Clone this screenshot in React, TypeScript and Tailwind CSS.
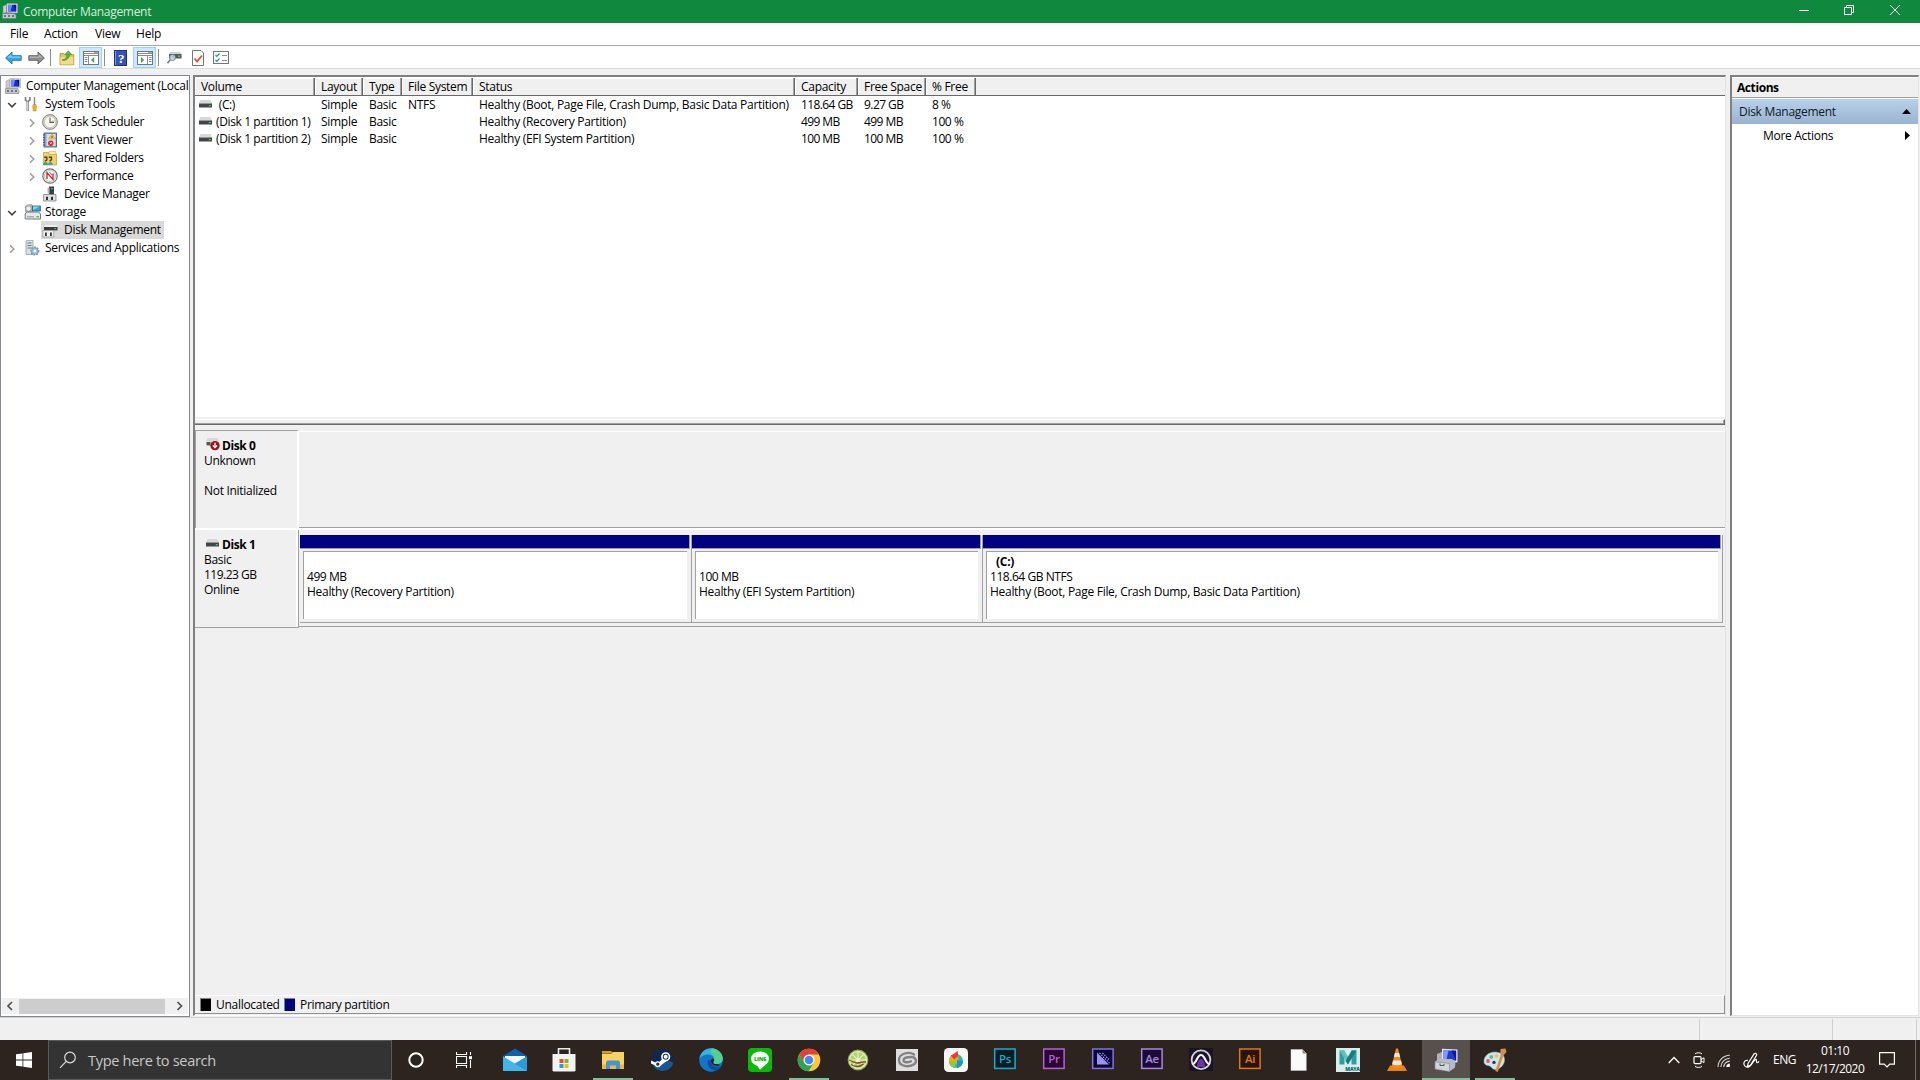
import React from 'react';

interface IconProps {
  className?: string;
}

const ComputerIcon: React.FC<IconProps> = ({ className = 'w-4 h-4' }) => (
  <svg viewBox="0 0 16 16" className={className}>
    <path d="M1 3.2l3.5-1.7v8l-3.5 0.8z" fill="#c9ccd2" stroke="#85888e" strokeWidth="0.5" />
    <path d="M5 0.5l10.5 0.2v9.3L5 9.5z" fill="#e3e5ea" stroke="#9a9da5" strokeWidth="0.5" />
    <path d="M6.2 1.7l8 0.2v6.9l-8-0.4z" fill="#1a2bd0" />
    <path d="M6.2 1.7l4 0.1-1.7 6.7-2.3-0.1z" fill="#6f8df2" />
    <path d="M11.5 1.8h2.7v7z" fill="#0a1690" />
    <path d="M0.5 10.5h12l1.5 2v3H0.5z" fill="#c3c6ca" stroke="#75787e" strokeWidth="0.6" />
    <path d="M2 12.3h2v1.5H2zM6 12.3h2v1.5H6zM10 12.3h2v1.5h-2z" fill="#55585c" />
  </svg>
);

const ToolsIcon = () => (
  <svg viewBox="0 0 16 16" className="w-4 h-4">
    <path d="M1.5 1v3.2l2.2 1.6 2.2-1.6V1" fill="none" stroke="#7d7d7d" strokeWidth="1.6" />
    <path d="M3.7 5v10" stroke="#7d7d7d" strokeWidth="2.4" />
    <path d="M3.7 5.5v9.2" stroke="#e8e8e8" strokeWidth="1" />
    <path d="M10.5 1v8" stroke="#888" strokeWidth="1.4" />
    <path d="M9.3 8.5h2.6l0.6 2-0.5 4.5H9.2l-0.5-4.5z" fill="#f0b323" stroke="#b87c0a" strokeWidth="0.5" />
  </svg>
);

const ClockIcon = () => (
  <svg viewBox="0 0 16 16" className="w-4 h-4">
    <circle cx="8" cy="8" r="7.4" fill="#d8d8d8" stroke="#777" strokeWidth="0.9" />
    <circle cx="8" cy="8" r="5.7" fill="#faf7e6" stroke="#999" strokeWidth="0.4" />
    <path d="M8 8h5v-3z" fill="#f4d99b" />
    <path d="M8 3.6V8.4h4" fill="none" stroke="#4a6078" strokeWidth="1.1" />
  </svg>
);

const EventIcon = () => (
  <svg viewBox="0 0 16 16" className="w-4 h-4">
    <rect x="2" y="1" width="12.5" height="14" fill="#8da7c9" stroke="#41516b" strokeWidth="0.8" />
    <rect x="4.5" y="2" width="9" height="12" fill="#d3def0" />
    <path d="M1 3h2M1 5.5h2M1 8h2M1 10.5h2M1 13h2" stroke="#41516b" strokeWidth="0.9" />
    <path d="M10 1.8l3.4 5H6.6z" fill="#ffd23c" stroke="#b98f12" strokeWidth="0.5" />
    <path d="M10 3.8v2.2" stroke="#333" strokeWidth="0.9" />
    <circle cx="8.8" cy="11.2" r="2.7" fill="#d5281f" />
    <path d="M7.8 10.2l2 2M9.8 10.2l-2 2" stroke="#fff" strokeWidth="0.8" />
  </svg>
);

const SharedIcon = () => (
  <svg viewBox="0 0 16 16" className="w-4 h-4">
    <path d="M1.5 2.5h5l1 1.5h7v11h-13z" fill="#f0cf68" stroke="#b58e2c" strokeWidth="0.6" />
    <path d="M7 1.5h7v3H7z" fill="#fbe9a8" stroke="#b58e2c" strokeWidth="0.4" />
    <path d="M2.2 7.3h2.6v2.6l-1.8 1.4M6.8 7.3h2.6v2.6l-1.8 1.4" fill="none" stroke="#4a4030" strokeWidth="1.4" />
    <path d="M1 15c0-2 1-3 2.6-3s2.4 1 2.4 3z" fill="#45a86a" />
    <path d="M6 15c0-2 1-3 2.3-3s2.4 1 2.4 3z" fill="#3d9cc0" />
  </svg>
);

const PerfIcon = () => (
  <svg viewBox="0 0 16 16" className="w-4 h-4">
    <circle cx="8" cy="8" r="7.2" fill="#f4f4f4" stroke="#747474" strokeWidth="1.2" />
    <circle cx="8" cy="8" r="5.4" fill="#fff" stroke="#a9a9a9" strokeWidth="0.7" />
    <path d="M5 11V4.8l6 6.6V5.5" fill="none" stroke="#c42324" strokeWidth="1.3" />
    <path d="M7.5 4.2l3 3" stroke="#c42324" strokeWidth="1" />
  </svg>
);

const DeviceIcon = () => (
  <svg viewBox="0 0 16 16" className="w-4 h-4">
    <path d="M7 0.5h5v8H7z" fill="#3b3f42" />
    <path d="M5.5 1.5h2v6h-2z" fill="#b4b8bb" />
    <rect x="9.3" y="2" width="1.4" height="1.4" fill="#3fe04c" />
    <path d="M1.5 8.5h12.5v6.5H1.5z" fill="#dcdee0" stroke="#777" strokeWidth="0.7" />
    <path d="M4 10.8h2V14H4zM9 10.8h2V14H9z" fill="#333" />
  </svg>
);

const StorageIcon = () => (
  <svg viewBox="0 0 17 16" className="w-[17px] h-4">
    <path d="M1.5 2.5L4 0.7h4v7H1.5z" fill="#c2c6ca" stroke="#7b7f84" strokeWidth="0.6" />
    <circle cx="4.5" cy="4.6" r="2.6" fill="#eef0f2" stroke="#888" strokeWidth="0.6" />
    <rect x="8.5" y="2" width="7.8" height="5" fill="#38a5d8" stroke="#2b5a75" strokeWidth="0.8" />
    <path d="M9 2.5h6.6L9 6z" fill="#8ed6f2" />
    <path d="M1.2 10l1.5-2h12l1.8 2v5H1.2z" fill="#e6e8ea" stroke="#66696d" strokeWidth="0.9" />
    <path d="M3 12.8h7" stroke="#999" strokeWidth="1.2" />
    <rect x="12.5" y="12" width="2.4" height="1.4" fill="#3fc04c" />
  </svg>
);

const DiskMgmtIcon = () => (
  <svg viewBox="0 0 16 16" className="w-4 h-4">
    <path d="M3 3.2h12.5l-1 2H1.8z" fill="#f0f1f2" />
    <path d="M2 5h13.5v3.4H2z" fill="#393c3e" />
    <rect x="12.3" y="6" width="1.6" height="1.1" fill="#3fe04c" />
    <path d="M0.8 8.5h11v6.5h-11z" fill="#eceeef" stroke="#888" strokeWidth="0.6" />
    <path d="M3 10.6h1.8V14H3zM8 10.6h1.8V14H8z" fill="#333" />
  </svg>
);

const ServicesIcon = () => (
  <svg viewBox="0 0 16 16" className="w-4 h-4">
    <path d="M2 1l1-0.7h6V14.5H2z" fill="#dbe0e5" stroke="#8b9299" strokeWidth="0.7" />
    <path d="M3.5 3h4M3.5 5.5h4M3.5 8h4" stroke="#5e6b78" strokeWidth="0.9" />
    <circle cx="10.8" cy="11" r="3.8" fill="#9fc4e2" stroke="#6a94b8" strokeWidth="1.6" strokeDasharray="1.6 1.2" />
    <circle cx="10.8" cy="11" r="3.1" fill="#a9cbe6" stroke="#6a94b8" strokeWidth="0.6" />
    <circle cx="10.8" cy="11" r="1.2" fill="#fff" />
  </svg>
);

const DriveIcon = () => (
  <svg viewBox="0 0 13 9" className="w-[13px] h-[9px] shrink-0">
    <path d="M1.5 0h10L13 3.5H0z" fill="#d6d8da" />
    <rect x="0" y="3.5" width="13" height="4" fill="#434648" />
    <rect x="9.8" y="5" width="1.8" height="1.2" fill="#42e04f" />
  </svg>
);

const Chevron: React.FC<{ open: boolean }> = ({ open }) => (
  <svg viewBox="0 0 10 10" className="w-[10px] h-[10px] mt-px">
    {open ? (
      <path d="M1.2 3L5 6.8 8.8 3" fill="none" stroke="#404040" strokeWidth="1.6" />
    ) : (
      <path d="M3 1.2L6.8 5 3 8.8" fill="none" stroke="#a0a0a0" strokeWidth="1.6" />
    )}
  </svg>
);

const tree = [
  { label: 'System Tools', level: 1, open: true, icon: <ToolsIcon /> },
  { label: 'Task Scheduler', level: 2, open: false, icon: <ClockIcon /> },
  { label: 'Event Viewer', level: 2, open: false, icon: <EventIcon /> },
  { label: 'Shared Folders', level: 2, open: false, icon: <SharedIcon /> },
  { label: 'Performance', level: 2, open: false, icon: <PerfIcon /> },
  { label: 'Device Manager', level: 2, open: null, icon: <DeviceIcon /> },
  { label: 'Storage', level: 1, open: true, icon: <StorageIcon /> },
  { label: 'Disk Management', level: 2, open: null, icon: <DiskMgmtIcon />, selected: true },
  { label: 'Services and Applications', level: 1, open: false, icon: <ServicesIcon /> },
];

const columns = [
  { label: 'Volume', width: 'w-[120px]', text: 'tracking-[-0.38px]' },
  { label: 'Layout', width: 'w-12', text: '' },
  { label: 'Type', width: 'w-[39px]', text: '' },
  { label: 'File System', width: 'w-[71px]', text: '' },
  { label: 'Status', width: 'w-[322px]', text: '' },
  { label: 'Capacity', width: 'w-[63px]', text: 'tracking-[-0.6px]' },
  { label: 'Free Space', width: 'w-[68px]', text: 'tracking-[-0.55px]' },
  { label: '% Free', width: 'w-[50px]', text: 'tracking-[-0.45px]' },
];

const volumes = [
  [' (C:)', 'Simple', 'Basic', 'NTFS', 'Healthy (Boot, Page File, Crash Dump, Basic Data Partition)', '118.64 GB', '9.27 GB', '8 %'],
  ['(Disk 1 partition 1)', 'Simple', 'Basic', '', 'Healthy (Recovery Partition)', '499 MB', '499 MB', '100 %'],
  ['(Disk 1 partition 2)', 'Simple', 'Basic', '', 'Healthy (EFI System Partition)', '100 MB', '100 MB', '100 %'],
];

const partitions = [
  { name: '', size: '499 MB', status: 'Healthy (Recovery Partition)', width: 'w-[392px]' },
  { name: '', size: '100 MB', status: 'Healthy (EFI System Partition)', width: 'w-[291px]' },
  {
    name: '(C:)',
    size: '118.64 GB NTFS',
    status: 'Healthy (Boot, Page File, Crash Dump, Basic Data Partition)',
    width: 'w-[740px]',
  },
];

const TitleBar = () => (
  <div className="h-[23px] bg-[#10893e] flex items-center text-white">
    <ComputerIcon className="w-4 h-4 ml-[2px] mb-px" />
    <span className="ml-[5px] text-[12px] tracking-[-0.3px] text-[#d9eedf]">Computer Management</span>
    <div className="ml-auto mr-[2px] flex h-full">
      <div className="w-[45px] flex justify-center pt-[5px] ml-px">
        <svg viewBox="0 0 10 10" className="w-[10px] h-[10px]"><path d="M0 5.5h10" stroke="#fff" /></svg>
      </div>
      <div className="w-[45px] flex justify-center pt-[5px]">
        <svg viewBox="0 0 10 10" className="w-[10px] h-[10px]">
          <path d="M0.5 2.5h7v7h-7zM2.5 2.5v-2h7v7h-2" fill="none" stroke="#fff" />
        </svg>
      </div>
      <div className="w-[47px] flex justify-center pt-[5px]">
        <svg viewBox="0 0 10 10" className="w-[10px] h-[10px]"><path d="M0 0l10 10M10 0L0 10" stroke="#fff" /></svg>
      </div>
    </div>
  </div>
);

const MenuBar = () => (
  <div className="h-[23px] bg-white border-b border-[#a9a9a9] flex items-center pl-[10px] text-[12px] tracking-[-0.2px]">
    <span className="w-[34px]">File</span>
    <span className="w-[51px]">Action</span>
    <span className="w-[41px]">View</span>
    <span>Help</span>
  </div>
);

const Separator: React.FC<IconProps> = ({ className = '' }) => (
  <div className={`w-px h-[17px] bg-[#8d8d8d] ${className}`} />
);

const PaneIcon: React.FC<{ flip?: boolean }> = ({ flip }) => (
  <svg viewBox="0 0 16 14" className="w-4 h-[14px]">
    <rect x="0.5" y="0.5" width="15" height="13" fill="#fff" stroke="#757575" />
    <path d="M1 2.5h14M1 4.5h14" stroke="#8c8c8c" />
    <path d="M11.5 1.5h1M13.5 1.5h1" stroke="#555" />
    {flip ? <path d="M10.5 5v8" stroke="#8c8c8c" /> : <path d="M5.5 5v8" stroke="#8c8c8c" />}
    {flip ? (
      <path d="M12 6.5h2.5M12 8.5h2.5M12 10.5h2.5" stroke="#6f8aa5" />
    ) : (
      <path d="M1.8 6.5h2.5M1.8 8.5h2.5M1.8 10.5h2.5" stroke="#6f8aa5" />
    )}
    {flip ? <path d="M4 6l3.2 3L4 12z" fill="#41a836" /> : <path d="M11.2 6L8 9l3.2 3z" fill="#41a836" />}
  </svg>
);

const ToolBar = () => (
  <div className="h-[23px] bg-white border-b border-[#dcdcdc] flex items-center">
    <svg viewBox="0 0 17 14" className="w-[17px] h-[14px] ml-[5px] mt-px">
      <path d="M0.6 7L7 1v3.7h9.2v4.6H7V13z" fill="#35a7e6" stroke="#1b6fa8" strokeWidth="0.9" />
      <path d="M2.5 6.6L6.3 3v2.6h9V7z" fill="#7fd0f6" />
    </svg>
    <svg viewBox="0 0 17 14" className="w-[17px] h-[14px] ml-[6px] mt-px">
      <path d="M16.4 7L10 1v3.7H0.8v4.6H10V13z" fill="#8f8f8f" stroke="#5c5c5c" strokeWidth="0.9" />
      <path d="M14.2 6.6L10.7 3.3v2.3h-9V7z" fill="#b3b3b3" />
    </svg>
    <Separator className="ml-[5px] mt-px" />
    <svg viewBox="0 0 16 16" className="w-4 h-4 ml-2 mt-px">
      <path d="M1 3.5h4l1 1.3h8.8v10H1z" fill="#e9c35d" stroke="#a88427" strokeWidth="0.7" />
      <path d="M1.5 7h12.8v7.4H1.5z" fill="#f5db88" />
      <path d="M3.5 9.5C6 9.5 8 7.5 8 4.5H5.8L9.4 0.8l3.4 3.7H10.5c0 4-3 6-7 6z" fill="#52bb3c" stroke="#2f8420" strokeWidth="0.5" />
    </svg>
    <div className="w-[23px] h-[21px] ml-1 mt-px bg-[#cce8ff] border border-[#99d1ff] flex items-center justify-center"><PaneIcon /></div>
    <Separator className="ml-[2px] mt-px" />
    <svg viewBox="0 0 13 16" className="w-[13px] h-4 ml-[9px] mt-px">
      <rect x="0.5" y="0.5" width="12" height="15" fill="#3355b5" stroke="#1f327a" />
      <path d="M1.5 1v14" stroke="#8398d8" />
      <text x="7" y="12.5" fontSize="13" fontWeight="bold" textAnchor="middle" fill="#fff" fontFamily="Liberation Serif">?</text>
    </svg>
    <div className="w-[23px] h-[21px] ml-[6px] mt-px bg-[#cce8ff] border border-[#99d1ff] flex items-center justify-center"><PaneIcon flip /></div>
    <Separator className="ml-[2px] mt-px" />
    <svg viewBox="0 0 16 14" className="w-4 h-[14px] ml-2 mt-[2px]">
      <path d="M3 1h10l1.5 2H2z" fill="#cdd0d2" />
      <path d="M2 3h12.5v4.5H2z" fill="#55595b" />
      <rect x="11" y="4.5" width="2" height="1.3" fill="#3fe04c" />
      <circle cx="5.5" cy="6.5" r="3" fill="#c9e2ee" fillOpacity="0.8" stroke="#6c7f8c" />
      <path d="M3.3 8.7L0.5 12.2" stroke="#6c7f8c" strokeWidth="1.6" />
    </svg>
    <svg viewBox="0 0 12 16" className="w-3 h-4 ml-[9px] mt-px">
      <path d="M0.5 0.5h8.5l2.5 2.5v12.5h-11z" fill="#fff" stroke="#777" />
      <path d="M2.5 8.5l2.5 3 5-6" fill="none" stroke="#e5532d" strokeWidth="1.8" />
    </svg>
    <svg viewBox="0 0 16 13" className="w-4 h-[13px] ml-[9px] mt-px">
      <rect x="0.5" y="0.5" width="15" height="12" fill="#fff" stroke="#757575" />
      <path d="M9 4.5h5M9 9.5h5" stroke="#8c8c8c" />
      <path d="M2.5 4l1.3 1.3L6.5 2.5M2.5 9l1.3 1.3L6.5 7.5" fill="none" stroke="#2b83cf" strokeWidth="1.2" />
    </svg>
  </div>
);

const TreePane = () => (
  <div className="w-[190px] shrink-0 h-[942px] bg-white border border-[#828790] flex flex-col overflow-hidden pt-px">
    <div className="h-[18px] flex items-center pl-1 whitespace-nowrap">
      <ComputerIcon className="w-4 h-4 shrink-0" />
      <span className="ml-[5px] tracking-[-0.27px]">Computer Management (Local</span>
    </div>
    {tree.map((node) => (
      <div key={node.label} className={`h-[18px] flex items-center whitespace-nowrap ${node.level === 2 ? 'pl-[26px]' : 'pl-[6px]'}`}>
        <div className="w-[10px] shrink-0">{node.open !== null && <Chevron open={node.open} />}</div>
        <div className={`h-[18px] flex items-center ml-1 pr-[3px] ${node.level === 2 ? 'pl-px' : 'pl-[3px]'} ${node.selected ? 'bg-[#d9d9d9]' : ''}`}>
          <div className="w-[17px]">{node.icon}</div>
          <span className={node.level === 2 ? 'ml-[5px]' : 'ml-1'}>{node.label}</span>
        </div>
      </div>
    ))}
    <div className="mt-auto mb-[2px] mx-px h-4 bg-[#f0f0f0] flex items-center">
      <svg viewBox="0 0 17 16" className="w-[17px] h-4"><path d="M10 4L6 8l4 4" fill="none" stroke="#505050" strokeWidth="1.7" /></svg>
      <div className="w-[146px] h-[15px] bg-[#cdcdcd]" />
      <svg viewBox="0 0 17 16" className="w-[17px] h-4 ml-auto"><path d="M6.5 4l4 4-4 4" fill="none" stroke="#505050" strokeWidth="1.7" /></svg>
    </div>
  </div>
);

const VolumeList = () => (
  <div className="h-[340px] bg-white">
    <div className="h-[19px] bg-[#f0f0f0] border-b border-[#696969] border-t border-t-white flex">
      {columns.map((col) => (
        <div key={col.label} className={`${col.width} h-[17px] pl-[6px] flex items-center border-r border-[#696969] shadow-[inset_-1px_0_0_#a0a0a0,inset_1px_1px_0_#fff] whitespace-nowrap`}>
          {col.label}
        </div>
      ))}
    </div>
    {volumes.map((row) => (
      <div key={row[0]} className="h-[17px] flex items-center whitespace-nowrap">
        {row.map((cell, i) => (
          <div key={i} className={`${columns[i].width} ${columns[i].text} flex items-center whitespace-pre shrink-0 ${i === 0 ? 'pl-1' : 'pl-[6px]'}`}>
            {i === 0 && <DriveIcon />}
            <span className={i === 0 ? 'ml-[4px]' : ''}>{cell}</span>
          </div>
        ))}
      </div>
    ))}
  </div>
);

const DiskMap = () => (
  <div className="bg-[#f0f0f0] flex flex-col grow">
    {/* splitter */}
    <div className="h-[8px] pt-[2px]">
      <div className="h-[6px] border-t border-t-white border-b border-b-[#696969] border-r border-r-[#696969] shadow-[inset_-1px_-1px_0_#a0a0a0]" />
    </div>
    <div className="h-[99px] mt-[5px] flex leading-[15px]">
      <div className="w-[104px] border-t border-l border-[#a0a0a0] border-r-2 border-r-white pl-[8px] pt-[7px]">
        <div className="flex items-center font-bold tracking-[-0.4px]">
          <svg viewBox="0 0 15 13" className="w-[15px] h-[13px] ml-[2px] mr-[1px] mb-[2px]">
            <path d="M1.5 0h10L13 3.5H0z" fill="#d6d8da" />
            <rect x="0.5" y="4" width="4" height="3.4" fill="#55585a" />
            <circle cx="9" cy="7.6" r="4.7" fill="#9c1220" />
            <path d="M9 4.8v4.6M6.9 7.5L9 9.6l2.1-2.1" fill="none" stroke="#fff" strokeWidth="1.3" />
          </svg>
          <span>Disk 0</span>
        </div>
        <div>Unknown</div>
        <div className="mt-[15px]">Not Initialized</div>
      </div>
      <div className="grow h-[97px] mt-px border-t border-t-white border-b border-b-[#a0a0a0]" />
    </div>
    <div className="h-[100px] flex border-t-2 border-t-white leading-[15px] -mt-[1px]">
      <div className="w-[104px] h-[98px] shrink-0 border-b border-[#a0a0a0] border-r border-r-[#a0a0a0] pl-[9px] pt-[7px] shadow-[inset_-2px_0_0_#fff]">
        <div className="flex items-center font-bold tracking-[-0.4px]">
          <div className="ml-[2px] mr-[3px] mb-[3px]"><DriveIcon /></div>
          <span>Disk 1</span>
        </div>
        <div>Basic</div>
        <div className="tracking-[-0.5px]">119.23 GB</div>
        <div>Online</div>
      </div>
      <div className="grow h-[97px] border-b border-[#a0a0a0] flex pt-[5px] pl-px">
        {partitions.map((p) => (
          <div key={p.size} className={`${p.width} h-[88px] shrink-0 border-b border-r border-[#a0a0a0]`}>
            <div className="h-[14px] bg-[#000080] border-b border-b-[#a0a0a0] border-r border-r-[#a0a0b0] mr-px" />
            <div className="mt-[2px] ml-[3px] mr-[4px] h-[68px] bg-white border-t border-l border-[#a0a0a0] pl-[3px] pt-[2px] whitespace-nowrap">
              <div className="h-[15px] font-bold pl-[6px]">{p.name}</div>
              <div className="tracking-[-0.45px]">{p.size}</div>
              <div>{p.status}</div>
            </div>
          </div>
        ))}
      </div>
    </div>
    <div className="mt-auto h-[19px] border-t border-t-white border-b border-b-[#8f8f8f] border-r border-r-[#8f8f8f] flex items-center pl-[5px]">
      <div className="w-[11px] h-[13px] bg-black border border-[#808080] border-b-0 border-r-0" />
      <span className="ml-[5px] w-[68px]">Unallocated</span>
      <div className="w-[11px] h-[13px] bg-[#000080] border border-[#808080] border-b-0 border-r-0" />
      <span className="ml-[5px] tracking-[-0.33px]">Primary partition</span>
    </div>
  </div>
);

const ActionsPane = () => (
  <div className="w-[189px] h-[941px] bg-white border-l-2 border-t-2 border-[#808080] border-r border-b border-r-[#e3e3e3] border-b-[#e3e3e3]">
    <div className="h-5 mt-px bg-[#f0f0f0] border-b border-[#a0a0a0] pl-[5px] flex items-center font-bold tracking-[-0.42px]">Actions</div>
    <div className="h-[25px] mt-px bg-gradient-to-b from-[#b9d1ea] to-[#99b4d1] flex items-center pl-[7px] pr-[7px] justify-between text-[#101828]">
      <span>Disk Management</span>
      <svg viewBox="0 0 9 5" className="w-[9px] h-[5px]"><path d="M0 5L4.5 0 9 5z" fill="#000" /></svg>
    </div>
    <div className="h-[23px] flex items-center pl-[31px] pr-2 justify-between">
      <span>More Actions</span>
      <svg viewBox="0 0 5 9" className="w-[5px] h-[9px]"><path d="M0 0l5 4.5L0 9z" fill="#000" /></svg>
    </div>
  </div>
);

interface AdobeProps {
  text?: string;
  fg: string;
  bg: string;
  children?: React.ReactNode;
}

const AdobeIcon: React.FC<AdobeProps> = ({ text, fg, bg, children }) => (
  <svg viewBox="0 0 24 24" className="w-6 h-6">
    <rect x="1.7" y="1" width="20.4" height="19.4" fill={bg} stroke={fg} strokeWidth="1.5" />
    <text x="12" y="15" fontSize="11.5" fontWeight="600" textAnchor="middle" fill={fg} fontFamily="Open Sans, sans-serif">{text}</text>
    {children}
  </svg>
);

const apps: { name: string; state?: string; icon: React.ReactNode }[] = [
  {
    name: 'mail',
    icon: (
      <svg viewBox="0 0 24 24" className="w-6 h-6">
        <path d="M0 8L12 0.5 24 8v4H0z" fill="#0d62ab" />
        <path d="M2 8h20v10H2z" fill="#f4f6f8" />
        <path d="M24 8.5L0 23h24z" fill="#1e8bd9" />
        <path d="M0 8.5l12 7L24 23H0z" fill="#42b6ec" />
        <path d="M12 15.5L24 8.5V23z" fill="#2a9ade" />
      </svg>
    ),
  },
  {
    name: 'store',
    icon: (
      <svg viewBox="0 0 24 24" className="w-6 h-6">
        <path d="M6.5 7V0.8h11V7" fill="none" stroke="#e8e8e8" strokeWidth="1.6" />
        <path d="M0.5 6h23v16.5l-1 1h-21l-1-1z" fill="#f2f2f2" />
        <path d="M7.5 11h4v4h-4z" fill="#e8502b" />
        <path d="M12.5 11h4v4h-4z" fill="#7ab929" />
        <path d="M7.5 16h4v4h-4z" fill="#2a9be0" />
        <path d="M12.5 16h4v4h-4z" fill="#f8b813" />
      </svg>
    ),
  },
  {
    name: 'explorer',
    state: 'open',
    icon: (
      <svg viewBox="0 0 24 24" className="w-6 h-6">
        <path d="M1 3h9l2 2H1z" fill="#d99a22" />
        <path d="M1 5.5h9.5L12 4h11v17H1z" fill="#fbd25d" />
        <path d="M1 16.5h22V21H1z" fill="#f0b63c" />
        <path d="M5 14l1.5-1.5h11L19 14v7h-4v-3.6H9V21H5z" fill="#4593d8" />
      </svg>
    ),
  },
  {
    name: 'steam',
    icon: (
      <svg viewBox="0 0 24 24" className="w-6 h-6">
        <circle cx="12.5" cy="12" r="11" fill="#12274f" />
        <path d="M3 17a11 11 0 0 0 20.4-2.5C18 12 9 13 3 17z" fill="#1a5790" />
        <path d="M1 12.5l7 3 5-5.5 4 2.8-6.6 5-2.8 1L1 15.5z" fill="#fff" />
        <circle cx="15.7" cy="8.8" r="3.8" fill="#12335f" stroke="#fff" strokeWidth="1.6" />
        <circle cx="15.7" cy="8.8" r="2" fill="#fff" />
        <circle cx="7.8" cy="16.2" r="2.3" fill="#12335f" stroke="#fff" strokeWidth="1.3" />
      </svg>
    ),
  },
  {
    name: 'edge',
    icon: (
      <svg viewBox="0 0 24 24" className="w-6 h-6">
        <circle cx="12" cy="12" r="11.8" fill="#1573c8" />
        <path d="M0.4 11C1.5 4 7 0.2 12 0.2 19 0.2 24 6 23.8 11c-0.2 3.5-3 5-6 5-2.6 0-4.2-1-3-2.6C16 11 14 6.5 9 6.5c-4 0-7.5 2.2-8.6 4.5z" fill="#35b4dc" />
        <path d="M13 0.3C20 1 24 6 23.8 11c-0.2 3.5-3 5-6 5-2.6 0-4.2-1-3-2.6C16 11 16 7 11 4z" fill="#5fd97a" fillOpacity="0.75" />
        <path d="M8.8 12.5C7.5 17 11 23 17.5 22.4c2-0.6 4.2-2.5 5-4.4-6 2.7-11.5-0.5-10.7-6.4z" fill="#0c4fa0" />
        <path d="M14.7 13.4c-1.2 1.6 0.4 2.6 3 2.6l4 1c-3 1.8-9.4 1-9.8-4 0-1.5 1-2.5 2-2.6 1.3 0 1.6 1.7 0.8 3z" fill="#2d241f" />
      </svg>
    ),
  },
  {
    name: 'line',
    icon: (
      <svg viewBox="0 0 24 24" className="w-6 h-6">
        <rect width="24" height="24" rx="4" fill="#0ab90a" />
        <ellipse cx="12" cy="10.8" rx="9" ry="7.4" fill="#fff" />
        <path d="M9 17.5l3 4.2 6-5.4z" fill="#fff" />
        <text x="12" y="13" fontSize="5.8" fontWeight="800" textAnchor="middle" fill="#0ab90a" fontFamily="Open Sans, sans-serif">LINE</text>
      </svg>
    ),
  },
  {
    name: 'chrome',
    state: 'open',
    icon: (
      <svg viewBox="0 0 24 24" className="w-6 h-6">
        <circle cx="12" cy="12" r="11.3" fill="#fbc934" />
        <path d="M2.2 6.4A11.3 11.3 0 0 1 21.8 6.5H12L7 14.5z" fill="#e04335" />
        <path d="M2.2 6.4A11.3 11.3 0 0 0 11.5 23.3L17 14.5 7.5 15z" fill="#2fa44f" />
        <circle cx="12" cy="12" r="5.5" fill="#fff" />
        <circle cx="12" cy="12" r="4.3" fill="#4587f3" />
      </svg>
    ),
  },
  {
    name: 'lime',
    icon: (
      <svg viewBox="0 0 24 24" className="w-6 h-6">
        <circle cx="12" cy="12" r="10.4" fill="#86a84a" />
        <circle cx="12" cy="12" r="9.3" fill="#dfeab4" />
        <circle cx="12" cy="12" r="7.8" fill="#b2cf6a" />
        <path d="M12 4v16M4 12h16M6.4 6.4l11.2 11.2M17.6 6.4L6.4 17.6" stroke="#eef5d2" strokeWidth="1.1" />
        <path d="M3 12c4 1.5 6 3 8.5 3s5-1.5 8.5-1" fill="none" stroke="#7a4a2c" strokeWidth="1.3" />
        <path d="M5 16.5c4 2.5 9 2.5 12.5-0.5" fill="none" stroke="#7a4a2c" strokeWidth="1.3" />
      </svg>
    ),
  },
  {
    name: 'clip',
    icon: (
      <svg viewBox="0 0 24 24" className="w-6 h-6">
        <rect x="1" y="1" width="22" height="22" fill="#dedede" />
        <path d="M19 6.5C14 3 4 5.5 4 12c0 6.5 10 8 15.5 4 3-2.5 1-7-3-7-4 0-8 0.5-8 3.2 0 2.5 4 2.6 7.5 1" fill="none" stroke="#828282" strokeWidth="2.3" strokeLinecap="round" />
      </svg>
    ),
  },
  {
    name: 'medibang',
    icon: (
      <svg viewBox="0 0 24 24" className="w-6 h-6">
        <rect width="24" height="24" rx="4.5" fill="#f7f7f7" />
        <circle cx="12" cy="13" r="7" fill="#28bda1" />
        <path d="M5 13a7 7 0 0 1 4-6.3L13.5 3l0.5 3.5 1 8L7 18z" fill="#f6a91c" />
        <path d="M6.5 7.5C9 6.5 11 5 13.5 3l0.7 5-4 3.5z" fill="#ea3d3f" />
        <path d="M5 13.5l7-1.5-1 8a7 7 0 0 1-6-6.5z" fill="#8fcb35" />
        <path d="M13 12l6 1a7 7 0 0 1-6 7z" fill="#1996cf" />
      </svg>
    ),
  },
  { name: 'ps', icon: <AdobeIcon text="Ps" fg="#22a9c9" bg="#041d26" /> },
  { name: 'pr', icon: <AdobeIcon text="Pr" fg="#b463cf" bg="#2a0634" /> },
  {
    name: 'me',
    icon: (
      <AdobeIcon fg="#7d74d6" bg="#0c0638">
        <path d="M6 4.5l12 12H6z" fill="#9c92f2" />
        <path d="M8.5 5l10 10M11.5 5l7 7" stroke="#9c92f2" strokeWidth="1.3" strokeDasharray="1.4 1.2" />
      </AdobeIcon>
    ),
  },
  { name: 'ae', icon: <AdobeIcon text="Ae" fg="#a98ad6" bg="#1c0a38" /> },
  {
    name: 'protools',
    icon: (
      <svg viewBox="0 0 24 24" className="w-6 h-6">
        <rect width="24" height="23" fill="#191423" />
        <circle cx="12" cy="11.8" r="9.4" fill="#1c1330" stroke="#d6d6d6" strokeWidth="1.8" />
        <path d="M7.5 19c1-4 2-8 4.5-8s3.5 4 4.5 8z" fill="#6a35a8" />
        <path d="M3.5 16c4 0 4.5-9 8.5-9s4.5 9 8.5 9" fill="none" stroke="#f2f2f2" strokeWidth="2.2" />
      </svg>
    ),
  },
  { name: 'ai', icon: <AdobeIcon text="Ai" fg="#d97a1c" bg="#2b1403" /> },
  {
    name: 'doc',
    icon: (
      <svg viewBox="0 0 24 24" className="w-6 h-6">
        <path d="M4 1.5h11.5l3.8 4v17H4z" fill="#fbfbfb" stroke="#ccc" strokeWidth="0.5" />
        <path d="M15.5 1.5v4h3.8z" fill="#8b8b8b" />
      </svg>
    ),
  },
  {
    name: 'maya',
    icon: (
      <svg viewBox="0 0 24 24" className="w-6 h-6">
        <rect width="24" height="24" fill="#d6efee" />
        <path d="M3.5 2.5h5v14h-5z" fill="#2f9f9c" />
        <path d="M15.5 2.5h5v14h-5z" fill="#2f9f9c" />
        <path d="M3.5 2.5h4.8L14 12l-2 4.5z" fill="#69bdb9" />
        <path d="M20.5 2.5h-4.8L9.5 13l2.5 3.5z" fill="#187b7d" />
        <text x="16.5" y="22.5" fontSize="5" fontWeight="800" textAnchor="middle" fill="#15696c" fontFamily="Open Sans, sans-serif">MAYA</text>
      </svg>
    ),
  },
  {
    name: 'vlc',
    icon: (
      <svg viewBox="0 0 24 24" className="w-6 h-6">
        <path d="M5 17.5h14l3 5.5H2z" fill="#ee8113" />
        <path d="M11 0.5h2L17.5 19c-3 1.6-8 1.6-11 0z" fill="#f58a1a" />
        <path d="M9.9 5h4.2l1 4H8.9z" fill="#e9e9e9" />
        <path d="M8 12.5h8l0.9 3.8c-3 1.3-6.8 1.3-9.8 0z" fill="#e9e9e9" />
      </svg>
    ),
  },
  {
    name: 'management',
    state: 'active',
    icon: (
      <svg viewBox="0 0 24 24" className="w-6 h-6">
        <path d="M3 6l5-2v10H3z" fill="#aeb2b8" />
        <path d="M8 0.8l15.5 0.7v13L8 12.5z" fill="#e3e6ec" />
        <path d="M9.5 2.2l12.6 0.6v10L9.5 11.3z" fill="#2039dc" />
        <path d="M9.5 2.2l5 0.2-2 9.3-3-0.4z" fill="#7e9bf8" />
        <path d="M17.5 2.6l4.6 0.2v10z" fill="#0b1795" />
        <path d="M1 13.5l4-2.5h13l3.5 3-0.5 5.5-5.5 4L1 21z" fill="#b4bcc2" />
        <path d="M1 13.8l14.5 1.7v8L1 21z" fill="#cfd5d9" stroke="#7c868d" strokeWidth="0.6" />
        <path d="M6 15.5v2h4V16" fill="none" stroke="#4c555b" strokeWidth="1" />
      </svg>
    ),
  },
  {
    name: 'paint',
    state: 'open',
    icon: (
      <svg viewBox="0 0 24 24" className="w-6 h-6">
        <path d="M1 14C0.5 8 6 4 12 4c6 0 10 3.5 9.5 8.5-0.5 5-5 9-9.5 9-3 0-3.5-3-5.5-3.5S1.3 17 1 14z" fill="#cfe4f3" stroke="#8fabc0" strokeWidth="0.6" />
        <circle cx="5" cy="13" r="1.9" fill="#e0605a" />
        <circle cx="8.3" cy="8.9" r="1.9" fill="#6cb85e" />
        <circle cx="13.5" cy="7.8" r="1.9" fill="#e9c24a" />
        <circle cx="11" cy="14.4" r="1.7" fill="#2d3a50" />
        <path d="M19.5 6L13.5 23.5" stroke="#dd8f34" strokeWidth="2.6" />
        <path d="M17.5 1l5-0.5 1 3.5-3.5 4-2.6-1.5z" fill="#c9935b" />
      </svg>
    ),
  },
];

const TaskBar = () => (
  <div className="h-10 bg-[#2d241f] flex text-white overflow-hidden">
    <div className="w-12 flex items-center justify-center">
      <svg viewBox="0 0 16 16" className="w-4 h-4">
        <path d="M0 2.3l6.5-0.9v6.2H0zM7.3 1.3L16 0v7.6H7.3zM0 8.4h6.5v6.2L0 13.7zM7.3 8.4H16V16l-8.7-1.2z" fill="#fff" />
      </svg>
    </div>
    <div className="w-[344px] bg-[#333333] border border-[#5a5a5a] flex items-center">
      <svg viewBox="0 0 18 18" className="w-[18px] h-[18px] ml-[10px]">
        <circle cx="11" cy="6.5" r="5.3" fill="none" stroke="#dcdcdc" strokeWidth="1.2" />
        <path d="M7.2 10.4L1 16.8" stroke="#dcdcdc" strokeWidth="1.2" />
      </svg>
      <span className="ml-[11px] mt-px text-[14.6px] tracking-[-0.34px] text-[#c8c8c8]">Type here to search</span>
    </div>
    <div className="w-12 flex items-center justify-center">
      <svg viewBox="0 0 16 16" className="w-4 h-4"><circle cx="8" cy="8" r="6.7" fill="none" stroke="#fff" strokeWidth="2" /></svg>
    </div>
    <div className="w-[51px] flex items-center pl-4">
      <svg viewBox="0 0 16 16" className="w-4 h-4">
        <path d="M0.5 0v2.5h10V0M0.5 16v-2.5h10V16M0.5 4.5h10v7h-10zM14.5 0v3M14.5 8v8" fill="none" stroke="#fff" strokeWidth="1.1" />
        <rect x="13" y="4.2" width="3" height="3" fill="#fff" />
      </svg>
    </div>
    <div className="flex">
      {apps.map((app) => (
        <div key={app.name} className={`w-12 mr-px h-10 flex flex-col items-center pt-2 ${app.state === 'active' ? 'bg-[#57504c]' : ''}`}>
          {app.icon}
          {app.state && <div className={`mt-[6px] h-[2px] bg-[#7fbf9a] ${app.state === 'active' ? 'w-12' : 'w-10'}`} />}
        </div>
      ))}
    </div>
    <div className="ml-auto flex items-center">
      <svg viewBox="0 0 12 8" className="w-3 h-2"><path d="M0.7 7L6 1.5 11.3 7" fill="none" stroke="#fff" strokeWidth="1.3" /></svg>
      <svg viewBox="0 0 12 16" className="w-3 h-4 ml-[13px]">
        <rect x="1" y="4.6" width="7" height="7" rx="1" fill="none" stroke="#fff" strokeWidth="1.2" />
        <path d="M8 7.5l3-1.7v4.8L8 9M2 1.8c2-1.4 5-1.4 7 0M2 14.4c2 1.4 5 1.4 7 0" fill="none" stroke="#fff" strokeWidth="1" />
      </svg>
      <svg viewBox="0 0 14 14" className="w-[14px] h-[14px] ml-3 mt-[2px]">
        <path d="M1 13A12 12 0 0 1 12.8 1.2M3.8 13A9.2 9.2 0 0 1 12.8 4.2M6.8 13a6.2 6.2 0 0 1 6-5.9" fill="none" stroke="#d8d8d8" strokeWidth="1.1" />
        <path d="M9.3 13A3.6 3.6 0 0 1 12.8 9.6V13z" fill="#fff" />
      </svg>
      <svg viewBox="0 0 17 17" className="w-[17px] h-[17px] ml-3">
        <path d="M5 11.5L11.2 1.7c1-1 3 0 2.4 1.6L7.5 13.2 4.6 14.6z" fill="none" stroke="#fff" strokeWidth="1.2" />
        <path d="M5 8.3C2 8 0.5 10 1 12.5s4 3.5 6 1.5 4-6 5.5-6.5 0.5 2.8 1.5 3.2 1.5-0.7 2-1.5" fill="none" stroke="#fff" strokeWidth="1.2" />
      </svg>
      <span className="ml-[13px] text-[12px] tracking-[-0.45px] w-[25px]">ENG</span>
      <div className="w-[75px] pr-px text-center text-[12px] leading-[18px] tracking-[-0.5px]">
        <div>01:10</div>
        <div>12/17/2020</div>
      </div>
      <svg viewBox="0 0 16 16" className="w-4 h-4 ml-[6px]">
        <path d="M0.6 0.6h14.8v11.6h-4.6L8 15l-2.8-2.8H0.6z" fill="none" stroke="#fff" strokeWidth="1.2" />
      </svg>
      <div className="ml-5 w-px h-10 bg-[#706a66] mr-1" />
    </div>
  </div>
);

const App: React.FC = () => {
  return (
    <div className="w-[1920px] h-[1080px] bg-[#f0f0f0] flex flex-col overflow-hidden font-['Open_Sans',sans-serif] text-[12px] tracking-[-0.29px] text-black">
      <TitleBar />
      <MenuBar />
      <ToolBar />
      <div className="h-[948px] pt-[6px] flex">
        <TreePane />
        <div className="ml-[3px] w-[1533px] h-[941px] border-t-2 border-l-2 border-[#808080] border-r border-r-[#e3e3e3] border-b border-b-white flex flex-col pb-[1px]">
          <VolumeList />
          <DiskMap />
        </div>
        <div className="ml-1">
          <ActionsPane />
        </div>
      </div>
      <div className="h-[23px] border-t border-[#d0d0d0] flex justify-end pt-px">
        <div className="w-[133px] border-l border-[#cfcfcf]" />
        <div className="w-[85px] border-l border-r border-[#cfcfcf]" />
        <div className="w-[3px]" />
      </div>
      <TaskBar />
    </div>
  );
};

export default App;
